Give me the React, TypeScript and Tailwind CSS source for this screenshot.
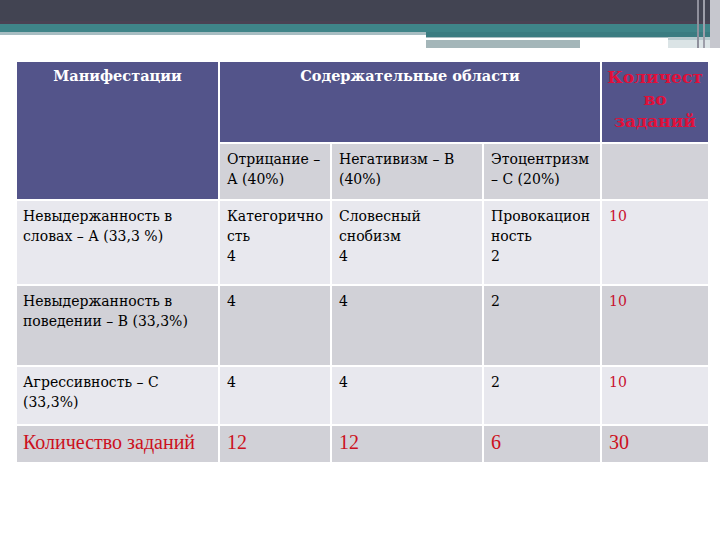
const rows = [
  {
    label: 'Невыдержанность в словах – А (33,3 %)',
    cells: [
      { title: 'Категорично сть', value: '4' },
      { title: 'Словесный снобизм', value: '4' },
      { title: 'Провокацион ность', value: '2' },
    ],
    total: '10',
    height: 'h-[85px]',
    bg: 'bg-[#e8e8ee]',
  },
  {
    label: 'Невыдержанность в поведении – В (33,3%)',
    cells: [{ value: '4' }, { value: '4' }, { value: '2' }],
    total: '10',
    height: 'h-[81px]',
    bg: 'bg-[#d1d1d7]',
  },
  {
    label: 'Агрессивность – С (33,3%)',
    cells: [{ value: '4' }, { value: '4' }, { value: '2' }],
    total: '10',
    height: 'h-[59px]',
    bg: 'bg-[#e8e8ee]',
  },
]

function SlideHeader() {
  return (
    <div className="relative">
      <div className="h-[21px] bg-[#424452]" />
      <div className="h-[3px] bg-[#4a4253]" />
      <div className="h-[8px] bg-[#3f8488]" />
      <div className="flex h-[5px]">
        <div className="w-[426px] flex flex-col">
          <div className="h-[3px] bg-[#a7bdc2]" />
        </div>
        <div className="flex-1 bg-[#3b7c81]" />
      </div>
      <div className="flex h-[3px]">
        <div className="w-[426px]" />
        <div className="w-[242px] border-t border-[#a9bec2]" />
        <div className="flex-1 bg-[#b9cbcf]" />
      </div>
      <div className="flex h-[8px]">
        <div className="w-[426px]" />
        <div className="w-[154px] bg-[#a4b6b9]" />
        <div className="w-[88px]" />
        <div className="flex-1 bg-[#dbe4e6]" />
      </div>
      <div className="absolute top-0 right-0 h-[48px] w-[23px] flex">
        <div className="w-[2px] bg-[#8f909c]" />
        <div className="w-[4px]" />
        <div className="w-[2px] bg-[#9d9ea9]" />
        <div className="w-[5px]" />
        <div className="flex-1 bg-[#c6c7ce]" />
      </div>
    </div>
  )
}

export default function App() {
  const font = "font-['DejaVu_Serif','Liberation_Serif',serif]"
  const timesRed = "font-['Liberation_Serif',serif] text-[20px] leading-[24px] text-[#cc1020]"

  return (
    <div className="w-[720px] h-[540px] bg-white overflow-hidden">
      <SlideHeader />
      <div className="mt-[14px] ml-[17px]">
        <table className={`border-collapse table-fixed w-[691px] text-[14px] leading-[20px] text-black ${font}`}>
          <colgroup>
            <col className="w-[202px]" />
            <col className="w-[112px]" />
            <col className="w-[152px]" />
            <col className="w-[118px]" />
            <col className="w-[107px]" />
          </colgroup>
          <tbody>
            <tr className="h-[81px] bg-[#53548a]">
              <th
                rowSpan={2}
                className="align-top border-2 border-white border-t-0 border-l-0 pt-[4px] text-white text-[14.5px] font-bold"
              >
                Манифестации
              </th>
              <th
                colSpan={3}
                className="align-top border-2 border-white border-t-0 pt-[4px] text-white text-[14.5px] font-bold"
              >
                Содержательные области
              </th>
              <th className="align-top border-2 border-white border-t-0 border-r-0 pt-[4px] text-[#e0103a] text-[17px] leading-[22px] font-bold whitespace-nowrap">
                Количест
                <br />
                во
                <br />
                заданий
              </th>
            </tr>
            <tr className="h-[57px] bg-[#d2d2d8]">
              <td className="align-top border-2 border-white px-[7px] pt-[5px]">Отрицание – А (40%)</td>
              <td className="align-top border-2 border-white px-[7px] pt-[5px]">Негативизм – В (40%)</td>
              <td className="align-top border-2 border-white px-[7px] pt-[5px]">Этоцентризм – С (20%)</td>
              <td className="align-top border-2 border-white border-r-0" />
            </tr>
            {rows.map(row => (
              <tr className={`${row.height} ${row.bg}`} key={row.label}>
                <td className="align-top border-2 border-white border-l-0 px-[6px] pt-[5px]">{row.label}</td>
                {row.cells.map((cell, i) => (
                  <td className="align-top border-2 border-white px-[7px] pt-[5px]" key={i}>
                    {cell.title && <div>{cell.title}</div>}
                    <div>{cell.value}</div>
                  </td>
                ))}
                <td className="align-top border-2 border-white border-r-0 px-[7px] pt-[5px] text-[#c8102e]">
                  {row.total}
                </td>
              </tr>
            ))}
            <tr className="h-[37px] bg-[#d1d1d7]">
              <td className={`align-top border-2 border-white border-l-0 border-b-0 px-[6px] pt-[4px] ${timesRed}`}>
                Количество заданий
              </td>
              <td className={`align-top border-2 border-white border-b-0 px-[7px] pt-[4px] ${timesRed}`}>12</td>
              <td className={`align-top border-2 border-white border-b-0 px-[7px] pt-[4px] ${timesRed}`}>12</td>
              <td className={`align-top border-2 border-white border-b-0 px-[7px] pt-[4px] ${timesRed}`}>6</td>
              <td className={`align-top border-2 border-white border-b-0 border-r-0 px-[7px] pt-[4px] ${timesRed}`}>30</td>
            </tr>
          </tbody>
        </table>
      </div>
    </div>
  )
}
